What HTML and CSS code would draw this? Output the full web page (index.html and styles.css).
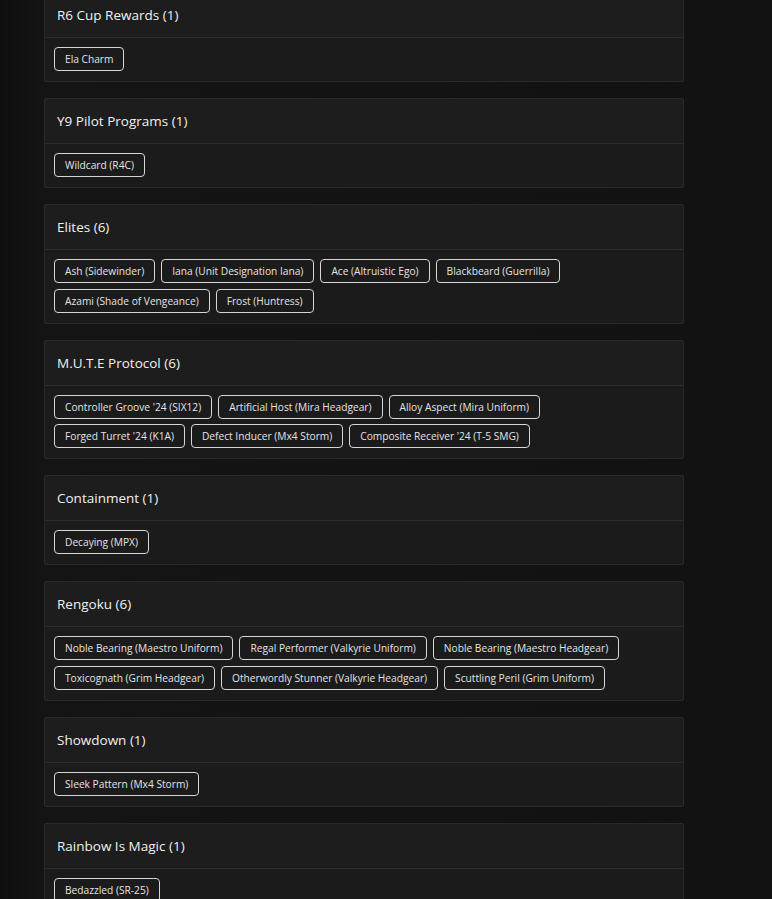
FILE: index.html
```html
<!DOCTYPE html>
<html lang="en">
<head>
    <meta charset="UTF-8">
    <meta name="viewport" content="width=device-width, initial-scale=1.0">
    <title>Bundles - Item Collection</title>
    <link rel="stylesheet" href="styles.css">
</head>
<body>
    <main class="collection">
        <div class="bundle">
            <div class="bundle-header">R6 Cup Rewards (1)</div>
            <div class="bundle-body">
                <span class="item-tag">Ela Charm</span>
            </div>
        </div>

        <div class="bundle">
            <div class="bundle-header">Y9 Pilot Programs (1)</div>
            <div class="bundle-body">
                <span class="item-tag">Wildcard (R4C)</span>
            </div>
        </div>

        <div class="bundle">
            <div class="bundle-header">Elites (6)</div>
            <div class="bundle-body">
                <span class="item-tag">Ash (Sidewinder)</span>
                <span class="item-tag">Iana (Unit Designation Iana)</span>
                <span class="item-tag">Ace (Altruistic Ego)</span>
                <span class="item-tag">Blackbeard (Guerrilla)</span>
                <span class="item-tag">Azami (Shade of Vengeance)</span>
                <span class="item-tag">Frost (Huntress)</span>
            </div>
        </div>

        <div class="bundle">
            <div class="bundle-header">M.U.T.E Protocol (6)</div>
            <div class="bundle-body">
                <span class="item-tag">Controller Groove '24 (SIX12)</span>
                <span class="item-tag">Artificial Host (Mira Headgear)</span>
                <span class="item-tag">Alloy Aspect (Mira Uniform)</span>
                <span class="item-tag">Forged Turret '24 (K1A)</span>
                <span class="item-tag">Defect Inducer (Mx4 Storm)</span>
                <span class="item-tag">Composite Receiver '24 (T-5 SMG)</span>
            </div>
        </div>

        <div class="bundle">
            <div class="bundle-header">Containment (1)</div>
            <div class="bundle-body">
                <span class="item-tag">Decaying (MPX)</span>
            </div>
        </div>

        <div class="bundle">
            <div class="bundle-header">Rengoku (6)</div>
            <div class="bundle-body">
                <span class="item-tag">Noble Bearing (Maestro Uniform)</span>
                <span class="item-tag">Regal Performer (Valkyrie Uniform)</span>
                <span class="item-tag">Noble Bearing (Maestro Headgear)</span>
                <span class="item-tag">Toxicognath (Grim Headgear)</span>
                <span class="item-tag">Otherwordly Stunner (Valkyrie Headgear)</span>
                <span class="item-tag">Scuttling Peril (Grim Uniform)</span>
            </div>
        </div>

        <div class="bundle">
            <div class="bundle-header">Showdown (1)</div>
            <div class="bundle-body">
                <span class="item-tag">Sleek Pattern (Mx4 Storm)</span>
            </div>
        </div>

        <div class="bundle">
            <div class="bundle-header">Rainbow Is Magic (1)</div>
            <div class="bundle-body">
                <span class="item-tag">Bedazzled (SR-25)</span>
            </div>
        </div>
    </main>
</body>
</html>
```

FILE: styles.css
```css
body {
    font-family: 'Open Sans', 'Liberation Sans', Arial, sans-serif;
    margin: 0;
    padding: 0;
    background-color: #121212;
    background-image: linear-gradient(90deg, #0e0e0e 0, #141414 44px, #121212 700px);
    color: #eee;
    min-height: 100vh;
}

.collection {
    width: 640px;
    margin: -8px 0 0 44px;
    display: flex;
    flex-direction: column;
    gap: 16px;
}

.bundle {
    background-color: #1b1b1b;
    border: 1px solid #2a2a2a;
    border-radius: 2px;
}

.bundle-header {
    background-color: #1d1d1d;
    border-bottom: 1px solid #2c2c2c;
    padding: 0 12px;
    height: 44px;
    line-height: 44px;
    font-size: 13.5px;
    font-weight: 500;
    color: #f0f0f0;
}

.bundle-body {
    display: flex;
    flex-wrap: wrap;
    gap: 5.5px 6px;
    padding: 9px 9px 10px;
}

.item-tag {
    display: inline-block;
    height: 24px;
    line-height: 22px;
    box-sizing: border-box;
    padding: 0 10px;
    border: 1px solid #d6d6d6;
    border-radius: 4px;
    font-size: 10.2px;
    color: #e4e4e4;
    white-space: nowrap;
}
```
